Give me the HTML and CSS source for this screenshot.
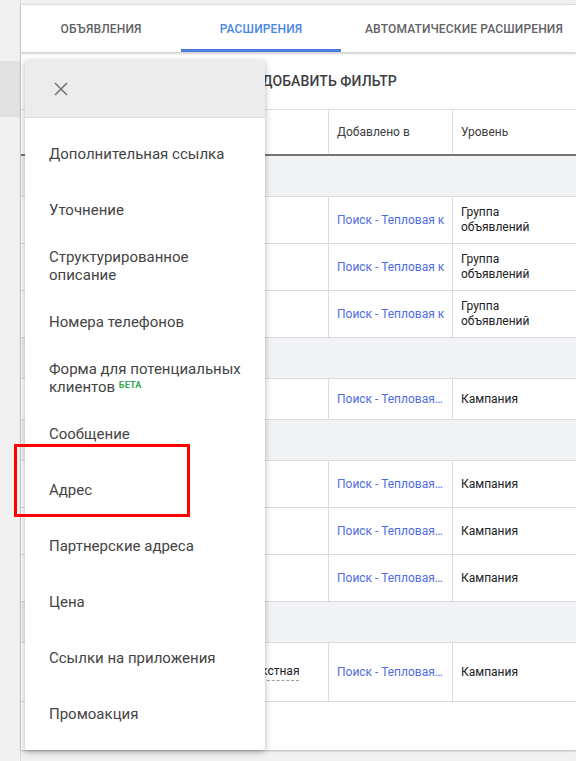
FILE: index.html
```html
<!DOCTYPE html>
<html lang="ru">
<head>
<meta charset="utf-8">
<title>Расширения</title>
<link rel="stylesheet" href="styles.css">
</head>
<body>
<div class="page">
  <aside class="side"><div class="side-sel"></div></aside>
  <main class="main">
    <nav class="tabs">
      <div class="tab">Объявления</div>
      <div class="tab active">Расширения</div>
      <div class="tab">Автоматические расширения</div>
    </nav>
    <div class="filter"><span class="filter-text">Добавить фильтр</span></div>
    <div class="table">
      <div class="row head">
        <div class="cell c1"></div>
        <div class="cell c2">Добавлено в</div>
        <div class="cell c3">Уровень</div>
      </div>
      <div class="group"></div>
      <div class="row r46">
        <div class="cell c1"></div>
        <div class="cell c2 link">Поиск - Тепловая к</div>
        <div class="cell c3">Группа<br>объявлений</div>
      </div>
      <div class="row r46">
        <div class="cell c1"></div>
        <div class="cell c2 link">Поиск - Тепловая к</div>
        <div class="cell c3">Группа<br>объявлений</div>
      </div>
      <div class="row r46">
        <div class="cell c1"></div>
        <div class="cell c2 link">Поиск - Тепловая к</div>
        <div class="cell c3">Группа<br>объявлений</div>
      </div>
      <div class="group"></div>
      <div class="row r40">
        <div class="cell c1"></div>
        <div class="cell c2 link">Поиск - Тепловая…</div>
        <div class="cell c3">Кампания</div>
      </div>
      <div class="group"></div>
      <div class="row r46">
        <div class="cell c1"></div>
        <div class="cell c2 link">Поиск - Тепловая…</div>
        <div class="cell c3">Кампания</div>
      </div>
      <div class="row r46">
        <div class="cell c1"></div>
        <div class="cell c2 link">Поиск - Тепловая…</div>
        <div class="cell c3">Кампания</div>
      </div>
      <div class="row r46">
        <div class="cell c1"></div>
        <div class="cell c2 link">Поиск - Тепловая…</div>
        <div class="cell c3">Кампания</div>
      </div>
      <div class="group"></div>
      <div class="row r58">
        <div class="cell c1 type"><span class="dashed">Контекстная</span></div>
        <div class="cell c2 link">Поиск - Тепловая…</div>
        <div class="cell c3">Кампания</div>
      </div>
    </div>
  </main>

  <div class="menu">
    <div class="menu-head">
      <svg class="close" width="14" height="14" viewBox="0 0 14 14"><path d="M1 1L13 13M13 1L1 13" stroke="#757575" stroke-width="1.6" fill="none"/></svg>
    </div>
    <ul class="menu-list">
      <li><span>Дополнительная ссылка</span></li>
      <li><span>Уточнение</span></li>
      <li><span>Структурированное описание</span></li>
      <li><span>Номера телефонов</span></li>
      <li><span class="label"><span>Форма для потенциальных</span><br><span>клиентов</span> <sup class="beta">БЕТА</sup></span></li>
      <li><span>Сообщение</span></li>
      <li><span>Адрес</span></li>
      <li><span>Партнерские адреса</span></li>
      <li><span>Цена</span></li>
      <li><span>Ссылки на приложения</span></li>
      <li><span>Промоакция</span></li>
    </ul>
  </div>
  <div class="highlight"></div>
</div>
</body>
</html>
```

FILE: styles.css
```css
* { box-sizing: border-box; }
html, body { margin: 0; padding: 0; }
body {
  background: #f1f1f1;
  font-family: Roboto, "Noto Sans", "Liberation Sans", sans-serif;
  width: 576px;
  height: 761px;
  overflow: hidden;
}
.page {
  display: flex;
  position: relative;
  height: 761px;
}
.side {
  width: 21px;
  flex: none;
  border-right: 1px solid #d9d9d9;
  background: #f1f1f1;
}
.side-sel {
  margin-top: 61px;
  height: 56px;
  background: #e2e2e2;
}
.main {
  flex: 1;
  margin-top: 4px;
  height: 746px;
  background: #fff;
  border-top: 1px solid #dadce0;
  box-shadow: 0 1px 2px rgba(0,0,0,0.25);
  overflow: hidden;
}
.tabs {
  display: flex;
  height: 47px;
  position: relative;
  box-shadow: 0 2px 2px rgba(0,0,0,0.18);
  z-index: 1;
  white-space: nowrap;
}
.tab {
  flex: none;
  min-width: 160px;
  padding: 0 24px;
  display: flex;
  align-items: center;
  justify-content: center;
  font-size: 12px;
  font-weight: 500;
  letter-spacing: 0.15px;
  text-transform: uppercase;
  color: #5f6368;
}
.tab.active {
  color: #4a86e8;
  border-bottom: 3px solid #4a7fe0;
  padding-top: 3px;
}
.filter {
  height: 58px;
  display: flex;
  align-items: center;
  padding-left: 241px;
  border-bottom: 1px solid #e0e0e0;
}
.filter-text {
  font-size: 14px;
  font-weight: 500;
  text-transform: uppercase;
  color: #3c4043;
  letter-spacing: 0.1px;
}
.row {
  display: grid;
  grid-template-columns: 308px 124px 1fr;
  border-bottom: 1px solid #dadce0;
}
.row.head {
  height: 46px;
  border-bottom: 2px solid #757575;
}
.row.r46 { height: 47px; }
.row.r40 { height: 41px; }
.row.r58 { height: 59px; }
.group {
  height: 41px;
  background: #f1f3f4;
  border-bottom: 1px solid #dadce0;
}
.cell {
  display: flex;
  align-items: center;
  padding: 0 8px;
  font-size: 12px;
  line-height: 15px;
  color: #202124;
  white-space: nowrap;
  overflow: hidden;
}
.c1, .c2 { border-right: 1px solid #dadce0; }
.head .cell { color: #3c4043; }
.link { color: #4f6ee0; }
.type { padding-left: 207px; }
.dashed {
  border-bottom: 1px dashed #9aa0a6;
  padding-bottom: 1px;
}
.menu {
  position: absolute;
  left: 25px;
  top: 60px;
  width: 240px;
  height: 690px;
  background: #fff;
  border-radius: 2px;
  box-shadow: 0 2px 6px rgba(0,0,0,0.3);
  z-index: 5;
}
.menu-head {
  height: 58px;
  background: #ececec;
  border-bottom: 1px solid #dadce0;
  display: flex;
  align-items: center;
  padding-left: 29px;
  border-radius: 2px 2px 0 0;
}
.close { display: block; }
.menu-list {
  list-style: none;
  margin: 0;
  padding: 8px 0;
}
.menu-list li {
  height: 56px;
  display: flex;
  align-items: center;
  padding: 0 16px 0 24px;
  font-size: 15px;
  line-height: 18px;
  color: #444;
}
.beta {
  font-size: 9px;
  font-weight: 700;
  color: #34a853;
  letter-spacing: 0.2px;
  vertical-align: 4px;
  line-height: 0;
}
.highlight {
  position: absolute;
  left: 14px;
  top: 444px;
  width: 176px;
  height: 73px;
  border: 3px solid #f00;
  z-index: 6;
}
```
